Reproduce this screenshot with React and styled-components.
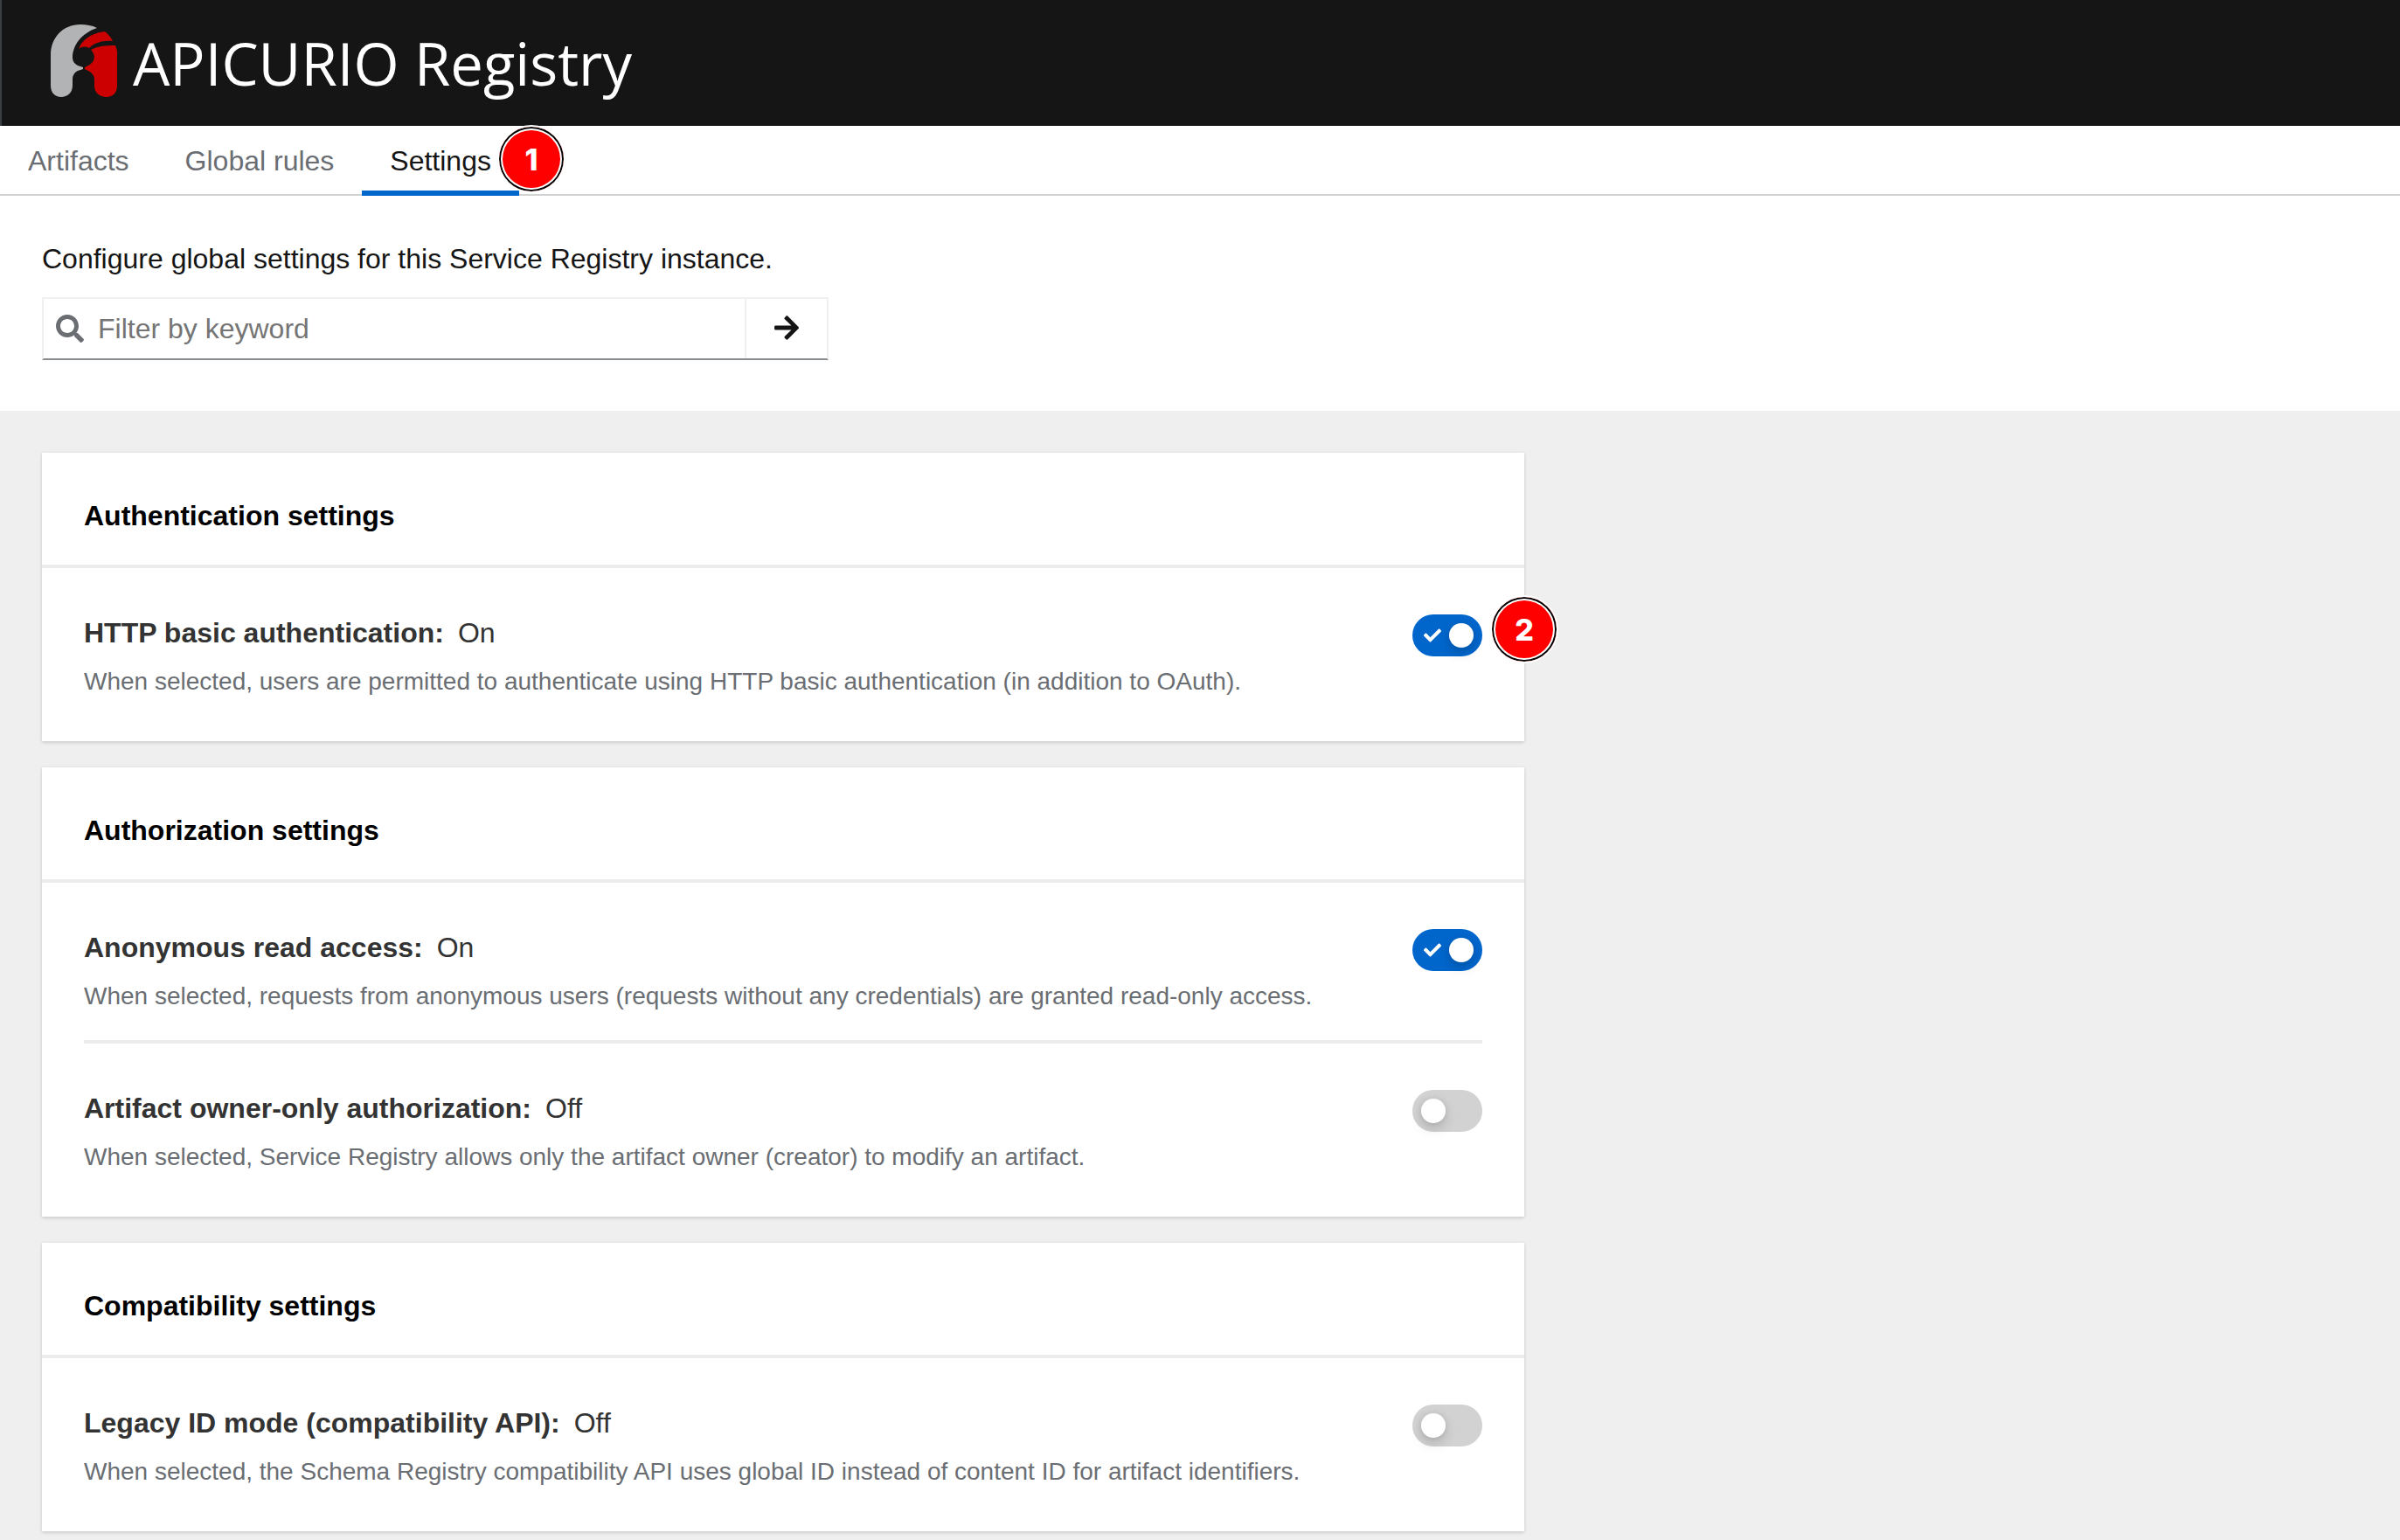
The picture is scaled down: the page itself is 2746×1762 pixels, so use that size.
import React, { useState } from "react";
import styled, { createGlobalStyle } from "styled-components";

const GlobalStyle = createGlobalStyle`
  *, *::before, *::after { box-sizing: border-box; }
  body {
    margin: 0;
    background: #efefef;
    color: #151515;
    font-family: "Liberation Sans", Arial, Helvetica, sans-serif;
    font-size: 32px;
    line-height: 48px;
  }
  h1, h2, p { margin: 0; font-weight: 400; font-size: inherit; }
`;

const Page = styled.div`
  min-height: 100vh;
  display: flex;
  flex-direction: column;
`;

const Masthead = styled.header`
  display: flex;
  align-items: center;
  height: 144px;
  padding: 0 55px;
  background: #151515;
  border-left: 2px solid #3c3f42;
`;

const Brand = styled.a`
  display: flex;
  align-items: center;
  gap: 17px;
  color: #fff;
  text-decoration: none;
`;

const BrandMark = styled.svg`
  width: 78px;
  height: 88px;
`;

const BrandName = styled.span`
  font-family: "Open Sans", "Noto Sans", sans-serif;
  font-size: 67px;
  line-height: 80px;
  white-space: nowrap;
`;

const Tabs = styled.nav`
  display: flex;
  height: 80px;
  background: #fff;
  border-bottom: 2px solid #d2d2d2;
`;

const Tab = styled.a`
  position: relative;
  display: flex;
  align-items: center;
  height: 80px;
  padding: 0 32px;
  color: ${(p) => (p.$active ? "#151515" : "#6a6e73")};
  border-bottom: 6px solid ${(p) => (p.$active ? "#06c" : "transparent")};
  border-top: 6px solid transparent;
  text-decoration: none;
`;

const Callout = styled.span`
  position: absolute;
  z-index: 1;
  display: flex;
  align-items: center;
  justify-content: center;
  width: 78px;
  height: 78px;
  padding-top: 2px;
  border: 2px solid #fff;
  border-radius: 50%;
  background: #f00;
  box-shadow: inset 0 0 0 2px #000, inset 0 0 0 4px #fff;
  color: #fff;
  font-family: Inter, sans-serif;
  font-size: 34px;
  font-weight: 800;
`;

const TabCallout = styled(Callout)`
  top: -7px;
  right: -53px;
`;

const ToggleCallout = styled(Callout)`
  top: -22px;
  left: 89px;
`;

const Intro = styled.section`
  display: flex;
  flex-direction: column;
  gap: 20px;
  padding: 48px 48px 58px;
  background: #fff;
`;

const SearchForm = styled.form`
  display: flex;
  width: 900px;
  max-width: 100%;
  height: 72px;
  border: 2px solid #f0f0f0;
  border-bottom-color: #8a8d90;
`;

const SearchField = styled.label`
  display: flex;
  flex: 1;
  align-items: center;
  gap: 16px;
  padding-left: 14px;
  color: #6a6e73;
`;

const SearchInput = styled.input`
  flex: 1;
  min-width: 0;
  padding: 0;
  border: 0;
  outline: 0;
  background: transparent;
  color: #151515;
  font: inherit;
  &::placeholder { color: #757575; opacity: 1; }
`;

const SearchButton = styled.button`
  display: flex;
  align-items: center;
  justify-content: center;
  width: 94px;
  padding: 0 0 2px;
  border: 0;
  border-left: 2px solid #f0f0f0;
  background: transparent;
  color: #151515;
`;

const Glyph = styled.svg`
  width: 32px;
  height: 32px;
  fill: currentColor;
`;

const Content = styled.main`
  display: flex;
  flex-direction: column;
  gap: 30px;
  padding: 48px 48px 10px;
`;

const Card = styled.section`
  width: 100%;
  max-width: 1696px;
  background: #fff;
  box-shadow: 0 2px 4px 0 rgba(3, 3, 3, 0.12), 0 0 4px 0 rgba(3, 3, 3, 0.06);
`;

const CardTitle = styled.h2`
  padding: 48px 48px 32px;
  border-bottom: 4px solid #ededed;
  color: #000;
  font-weight: 700;
`;

const CardBody = styled.div`
  padding: 0 48px 18px;
`;

const Row = styled.div`
  display: flex;
  align-items: flex-start;
  justify-content: space-between;
  gap: 48px;
  padding: 50px 0 29px;
  & + & { border-top: 4px solid #ededed; }
`;

const RowText = styled.div`
  display: flex;
  flex-direction: column;
  gap: 11px;
`;

const RowLabel = styled.label`
  display: flex;
  gap: 16px;
  color: #333;
  font-weight: 700;
`;

const RowState = styled.span`
  font-weight: 400;
`;

const Description = styled.p`
  color: #6a6e73;
  font-size: 28px;
  line-height: 42px;
`;

const SwitchCell = styled.div`
  position: relative;
  display: flex;
  flex: none;
  margin-top: 3px;
`;

const SwitchInput = styled.input`
  appearance: none;
  display: flex;
  align-items: center;
  width: 80px;
  height: 48px;
  margin: 0;
  padding: 0 10px;
  border-radius: 24px;
  background: #d2d2d2;
  cursor: pointer;
  &::before {
    content: "";
    width: 28px;
    height: 28px;
    border-radius: 50%;
    background: #fff;
    box-shadow: 0 6px 14px rgba(3, 3, 3, 0.16), 0 0 6px rgba(3, 3, 3, 0.08);
  }
  &:checked {
    justify-content: flex-end;
    background: #06c;
  }
`;

const SwitchCheck = styled.svg`
  position: absolute;
  top: 14px;
  left: 13px;
  width: 20px;
  height: 20px;
  fill: #fff;
  pointer-events: none;
`;

function ApicurioMark() {
  return (
    <BrandMark viewBox="0 0 78 88" aria-hidden="true">
      <path
        fill="#b1b3b4"
        d="M54 4C48 1 42 0 35 0C15 0 1 15 1 35V70C1 78 6 83 13 83C20 83 26 78 26 70V63C26 58 28 55 32 53L38 51V49L32 47C28 45 26 42 26 38C26 24 36 10 54 4Z"
      />
      <path
        fill="#c00"
        d="M33 28C36 19 46 10 63 8C67 11 70 15 72 19C60 18 51 21 45 27C41 25 37 25 33 28Z"
      />
      <path
        fill="#c00"
        d="M47 29C54 25 62 24 75 24L77 30V70C77 78 72 83 65 83C57 83 51 78 51 70V63C51 58 48 55 44 53L40 51V49L44 47C52 43 53 35 47 29Z"
      />
    </BrandMark>
  );
}

function SearchGlyph() {
  return (
    <Glyph viewBox="0 0 512 512" aria-hidden="true">
      <path d="M505 442.7L405.3 343c-4.500-4.500-10.600-7-17-7H372c27.600-35.300 44-79.700 44-128C416 93.100 322.900 0 208 0S0 93.100 0 208s93.100 208 208 208c48.300 0 92.700-16.400 128-44v16.300c0 6.400 2.500 12.500 7 17l99.700 99.700c9.400 9.400 24.600 9.400 33.900 0l28.300-28.300c9.400-9.400 9.400-24.600.1-34zM208 336c-70.700 0-128-57.200-128-128 0-70.700 57.200-128 128-128 70.700 0 128 57.200 128 128 0 70.700-57.200 128-128 128z" />
    </Glyph>
  );
}

function ArrowGlyph() {
  return (
    <Glyph viewBox="0 0 448 512" aria-hidden="true">
      <path d="M190.500 66.900l22.200-22.200c9.400-9.400 24.600-9.400 33.900 0L441 239c9.400 9.400 9.400 24.600 0 33.900L246.600 467.300c-9.400 9.400-24.600 9.400-33.900 0l-22.200-22.200c-9.500-9.500-9.300-25 .4-34.300L311.400 296H24c-13.300 0-24-10.700-24-24v-32c0-13.300 10.700-24 24-24h287.400L190.900 101.200c-9.800-9.300-10-24.800-.4-34.300z" />
    </Glyph>
  );
}

const groups = [
  {
    title: "Authentication settings",
    settings: [
      {
        id: "http-basic",
        label: "HTTP basic authentication:",
        text: "When selected, users are permitted to authenticate using HTTP basic authentication (in addition to OAuth).",
        on: true,
        callout: "2",
      },
    ],
  },
  {
    title: "Authorization settings",
    settings: [
      {
        id: "anonymous-read",
        label: "Anonymous read access:",
        text: "When selected, requests from anonymous users (requests without any credentials) are granted read-only access.",
        on: true,
      },
      {
        id: "owner-only",
        label: "Artifact owner-only authorization:",
        text: "When selected, Service Registry allows only the artifact owner (creator) to modify an artifact.",
        on: false,
      },
    ],
  },
  {
    title: "Compatibility settings",
    settings: [
      {
        id: "legacy-id",
        label: "Legacy ID mode (compatibility API):",
        text: "When selected, the Schema Registry compatibility API uses global ID instead of content ID for artifact identifiers.",
        on: false,
      },
    ],
  },
];

function Setting({ id, label, text, on: initial, callout }) {
  const [on, setOn] = useState(initial);
  return (
    <Row>
      <RowText>
        <RowLabel htmlFor={id}>
          {label}
          <RowState>{on ? "On" : "Off"}</RowState>
        </RowLabel>
        <Description>{text}</Description>
      </RowText>
      <SwitchCell>
        <SwitchInput
          id={id}
          type="checkbox"
          role="switch"
          checked={on}
          onChange={(e) => setOn(e.target.checked)}
        />
        {on && (
          <SwitchCheck viewBox="0 0 512 512" aria-hidden="true">
            <path d="M173.898 439.404l-166.400-166.400c-9.997-9.997-9.997-26.206 0-36.204l36.203-36.204c9.997-9.998 26.207-9.998 36.204 0L192 312.690 432.095 72.596c9.997-9.997 26.207-9.997 36.204 0l36.203 36.204c9.997 9.997 9.997 26.206 0 36.204l-294.400 294.401c-9.998 9.997-26.207 9.997-36.204-.001z" />
          </SwitchCheck>
        )}
        {callout && <ToggleCallout>{callout}</ToggleCallout>}
      </SwitchCell>
    </Row>
  );
}

export default function App() {
  return (
    <Page>
      <GlobalStyle />
      <Masthead>
        <Brand href="#">
          <ApicurioMark />
          <BrandName>APICURIO Registry</BrandName>
        </Brand>
      </Masthead>
      <Tabs>
        <Tab href="#artifacts">Artifacts</Tab>
        <Tab href="#rules">Global rules</Tab>
        <Tab href="#settings" $active aria-current="page">
          Settings
          <TabCallout>1</TabCallout>
        </Tab>
      </Tabs>
      <Intro>
        <p>Configure global settings for this Service Registry instance.</p>
        <SearchForm role="search" onSubmit={(e) => e.preventDefault()}>
          <SearchField>
            <SearchGlyph />
            <SearchInput type="text" placeholder="Filter by keyword" aria-label="Filter by keyword" />
          </SearchField>
          <SearchButton type="submit" aria-label="Search">
            <ArrowGlyph />
          </SearchButton>
        </SearchForm>
      </Intro>
      <Content>
        {groups.map((group) => (
          <Card key={group.title}>
            <CardTitle>{group.title}</CardTitle>
            <CardBody>
              {group.settings.map((s) => (
                <Setting key={s.id} {...s} />
              ))}
            </CardBody>
          </Card>
        ))}
      </Content>
    </Page>
  );
}
